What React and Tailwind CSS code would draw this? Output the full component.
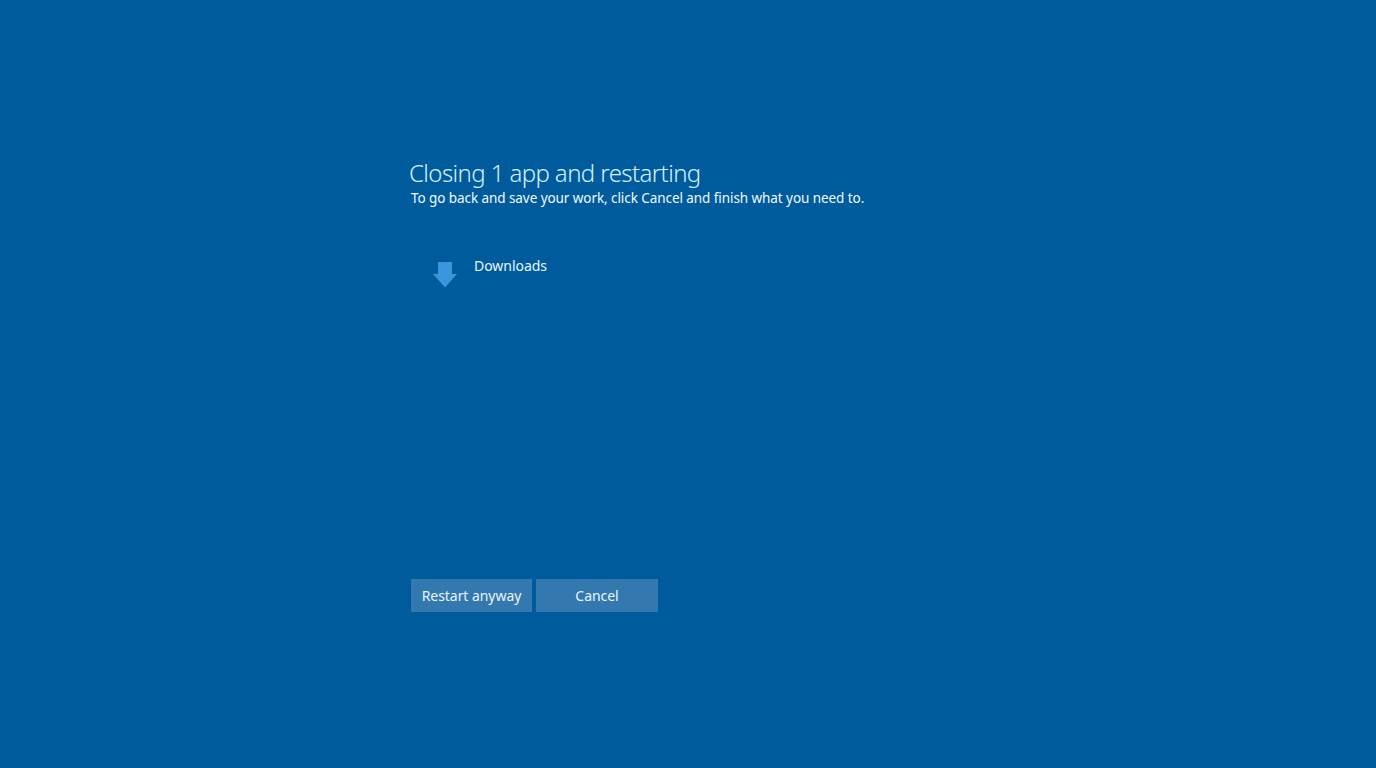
export default function App() {
  return (
    <div className="w-[1376px] h-[768px] overflow-hidden bg-[#005b9d] flex flex-col pl-[411px] pt-[156px] text-white" style={{ fontFamily: '"Noto Sans", sans-serif' }}>
      <h1 className="text-[24px] leading-[33px] font-light text-[#d2f0ff] tracking-[-0.6px] -ml-[2px]">Closing 1 app and restarting</h1>
      <p className="mt-[1px] text-[13.5px] leading-[16px] tracking-[-0.07px] text-[#f0faff]">To go back and save your work, click Cancel and finish what you need to.</p>
      <div className="flex mt-[50px] pl-[22px] h-[323px]">
        <svg width="24" height="26" viewBox="0 0 24 26" className="mt-[6px] shrink-0">
          <path d="M5 0H19V12H24L12 25.5L0 12H5Z" fill="#3a96dd" />
        </svg>
        <span className="ml-[17px] text-[14px] leading-[20px] text-[#e6f6ff] tracking-[-0.03px]">Downloads</span>
      </div>
      <div className="flex gap-[4px]">
        <button className="w-[121px] h-[33px] bg-[#3378ae] text-[14px] text-[#e8f6ff] tracking-[-0.05px]">Restart anyway</button>
        <button className="w-[122px] h-[33px] bg-[#3378ae] text-[14px] text-[#e8f6ff] tracking-[-0.05px]">Cancel</button>
      </div>
    </div>
  );
}
